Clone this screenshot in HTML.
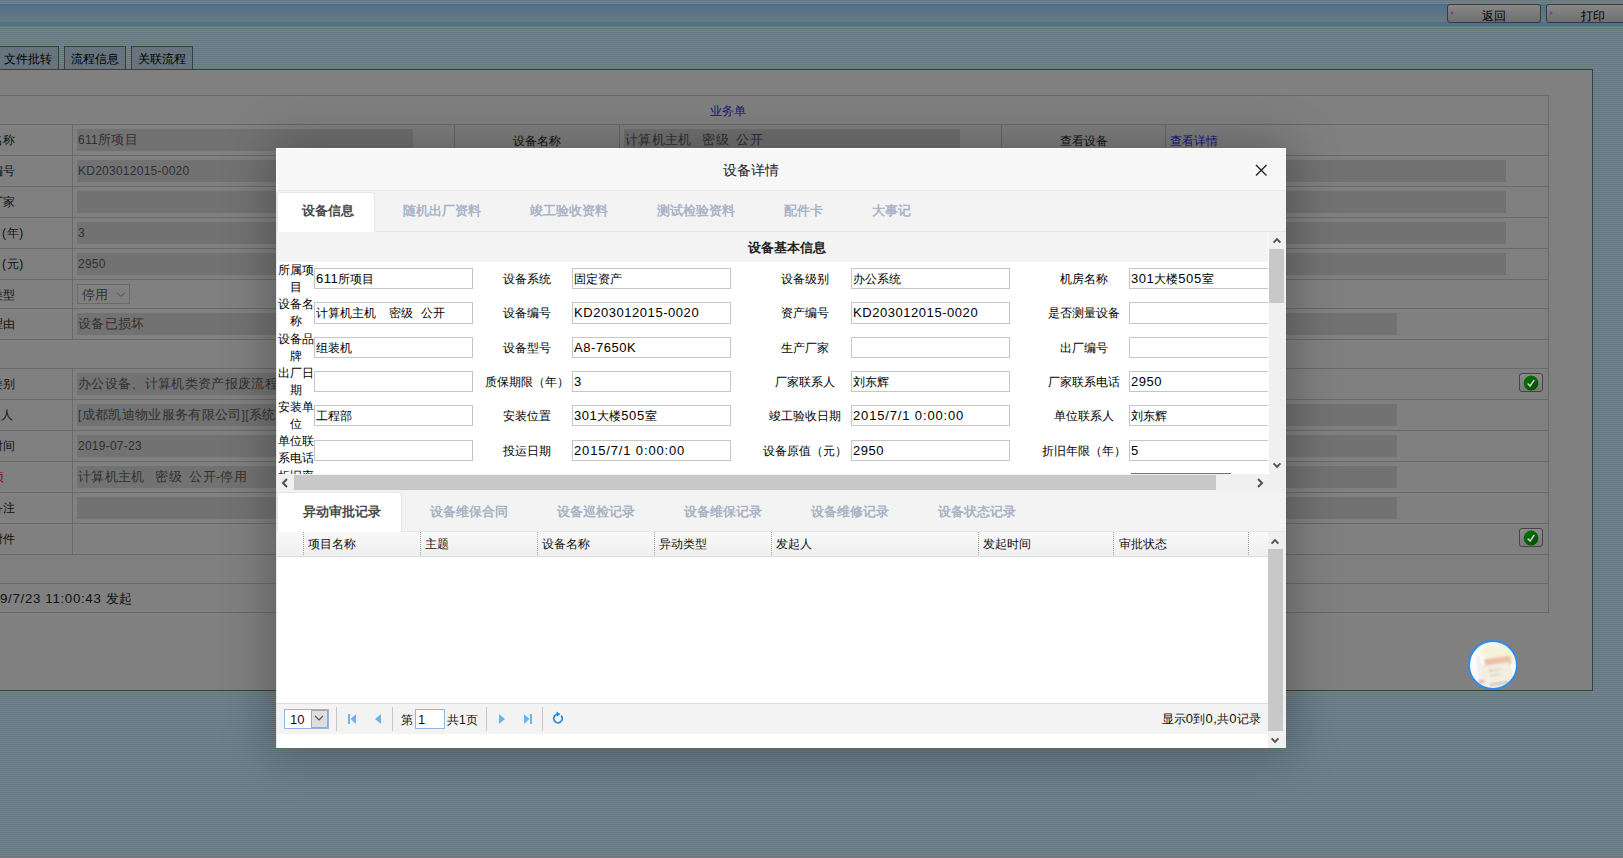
<!DOCTYPE html>
<html><head><meta charset="utf-8"><title>设备详情</title>
<style>
html,body{margin:0;padding:0;width:1623px;height:858px;overflow:hidden}
body{position:relative;font-family:"Liberation Sans",sans-serif;background:repeating-linear-gradient(to bottom,#63787f 0px,#63787f 1px,#818181 1px,#818181 2px)}
div,svg{position:absolute}
.t{white-space:nowrap}
</style></head><body>
<div style="left:0px;top:4px;width:1623px;height:1px;background:#4f6c85"></div>
<div style="left:0px;top:5px;width:1623px;height:17px;background:linear-gradient(#546f88,#667a82)"></div>
<div style="left:0px;top:22px;width:1623px;height:4px;background:#51708a"></div>
<div style="left:1447px;top:4px;width:94px;height:19px;box-sizing:border-box;border:1px solid #3b3b3b;border-radius:3px;background:linear-gradient(#888888,#6e6e6e)"></div>
<div style="left:1451px;top:11px;width:0;height:0;border-top:2.5px solid transparent;border-bottom:2.5px solid transparent;border-left:3.5px solid #7b3f9c"></div>
<div class="t" style="left:1464.0px;width:60px;text-align:center;top:8.0px;font-size:12px;line-height:16px;color:#000;">返回</div>
<div style="left:1546px;top:4px;width:90px;height:19px;box-sizing:border-box;border:1px solid #3b3b3b;border-radius:3px;background:linear-gradient(#888888,#6e6e6e)"></div>
<div style="left:1550px;top:11px;width:0;height:0;border-top:2.5px solid transparent;border-bottom:2.5px solid transparent;border-left:3.5px solid #7b3f9c"></div>
<div class="t" style="left:1563.0px;width:60px;text-align:center;top:8.0px;font-size:12px;line-height:16px;color:#000;">打印</div>
<div style="left:-10px;top:46px;width:69px;height:24px;box-sizing:border-box;border:1px solid #3c3c3c;background:#67747e"></div>
<div class="t" style="left:-2.5px;width:60px;text-align:center;top:50.5px;font-size:12px;line-height:16px;color:#000;">文件批转</div>
<div style="left:64px;top:46px;width:62px;height:24px;box-sizing:border-box;border:1px solid #3c3c3c;background:#67747e"></div>
<div class="t" style="left:65.0px;width:60px;text-align:center;top:50.5px;font-size:12px;line-height:16px;color:#000;">流程信息</div>
<div style="left:131px;top:46px;width:62px;height:24px;box-sizing:border-box;border:1px solid #3c3c3c;background:#67747e"></div>
<div class="t" style="left:132.0px;width:60px;text-align:center;top:50.5px;font-size:12px;line-height:16px;color:#000;">关联流程</div>
<div style="left:-5px;top:69px;width:1598px;height:622px;box-sizing:border-box;border:1px solid #3d3d3d;background:#808080"></div>
<div style="left:-5px;top:95px;width:1554px;height:1px;background:#6a6a6a"></div>
<div style="left:-5px;top:124px;width:1554px;height:1px;background:#6a6a6a"></div>
<div style="left:-5px;top:155px;width:1554px;height:1px;background:#6a6a6a"></div>
<div style="left:-5px;top:186px;width:1554px;height:1px;background:#6a6a6a"></div>
<div style="left:-5px;top:217px;width:1554px;height:1px;background:#6a6a6a"></div>
<div style="left:-5px;top:248px;width:1554px;height:1px;background:#6a6a6a"></div>
<div style="left:-5px;top:279px;width:1554px;height:1px;background:#6a6a6a"></div>
<div style="left:-5px;top:308px;width:1554px;height:1px;background:#6a6a6a"></div>
<div style="left:-5px;top:339px;width:1554px;height:1px;background:#6a6a6a"></div>
<div style="left:-5px;top:368px;width:1554px;height:1px;background:#6a6a6a"></div>
<div style="left:-5px;top:399px;width:1554px;height:1px;background:#6a6a6a"></div>
<div style="left:-5px;top:430px;width:1554px;height:1px;background:#6a6a6a"></div>
<div style="left:-5px;top:461px;width:1554px;height:1px;background:#6a6a6a"></div>
<div style="left:-5px;top:492px;width:1554px;height:1px;background:#6a6a6a"></div>
<div style="left:-5px;top:523px;width:1554px;height:1px;background:#6a6a6a"></div>
<div style="left:-5px;top:554px;width:1554px;height:1px;background:#6a6a6a"></div>
<div style="left:-5px;top:583px;width:1554px;height:1px;background:#6a6a6a"></div>
<div style="left:-5px;top:612px;width:1554px;height:1px;background:#6a6a6a"></div>
<div style="left:1548px;top:95px;width:1px;height:518px;background:#6a6a6a"></div>
<div style="left:72px;top:124px;width:1px;height:215px;background:#6a6a6a"></div>
<div style="left:72px;top:368px;width:1px;height:186px;background:#6a6a6a"></div>
<div style="left:454px;top:124px;width:1px;height:31px;background:#6a6a6a"></div>
<div style="left:619px;top:124px;width:1px;height:31px;background:#6a6a6a"></div>
<div style="left:1001px;top:124px;width:1px;height:31px;background:#6a6a6a"></div>
<div style="left:1165px;top:124px;width:1px;height:31px;background:#6a6a6a"></div>
<div class="t" style="left:688.0px;width:80px;text-align:center;top:102.5px;font-size:12px;line-height:16px;color:#14147a;">业务单</div>
<div style="left:77px;top:129px;width:336px;height:22px;background:#727272"></div>
<div class="t" style="left:78px;top:131.0px;font-size:13px;line-height:18px;color:#303030;"><span style="font-size:12px;letter-spacing:0.25px;">611</span><span style="font-size:13px;letter-spacing:0.33px;">所项目</span></div>
<div class="t" style="left:487.0px;width:100px;text-align:center;top:132.5px;font-size:12px;line-height:16px;color:#111;">设备名称</div>
<div style="left:624px;top:129px;width:336px;height:22px;background:#727272"></div>
<div class="t" style="left:625px;top:131.0px;font-size:13px;line-height:18px;color:#303030;"><span style="font-size:13px;letter-spacing:0.33px;">计算机主机</span><span style="font-size:12px;letter-spacing:0.25px;">&nbsp;&nbsp; </span><span style="font-size:13px;letter-spacing:0.33px;">密级</span><span style="font-size:12px;letter-spacing:0.25px;">&nbsp; </span><span style="font-size:13px;letter-spacing:0.33px;">公开</span></div>
<div class="t" style="left:1033.5px;width:100px;text-align:center;top:132.5px;font-size:12px;line-height:16px;color:#111;">查看设备</div>
<div class="t" style="left:1170px;top:132.5px;font-size:12px;line-height:16px;color:#14147a;">查看详情</div>
<div style="left:77px;top:160px;width:1429px;height:22px;background:#727272"></div>
<div class="t" style="left:78px;top:162.0px;font-size:13px;line-height:18px;color:#303030;"><span style="font-size:12px;letter-spacing:0.25px;">KD203012015-0020</span></div>
<div style="left:77px;top:191px;width:1429px;height:22px;background:#727272"></div>
<div style="left:77px;top:222px;width:1429px;height:22px;background:#727272"></div>
<div class="t" style="left:78px;top:224.0px;font-size:13px;line-height:18px;color:#303030;"><span style="font-size:12px;letter-spacing:0.25px;">3</span></div>
<div style="left:77px;top:253px;width:1429px;height:22px;background:#727272"></div>
<div class="t" style="left:78px;top:255.0px;font-size:13px;line-height:18px;color:#303030;"><span style="font-size:12px;letter-spacing:0.25px;">2950</span></div>
<div style="left:77px;top:284px;width:53px;height:20px;box-sizing:border-box;border:1px solid #6a6a6a"></div>
<div class="t" style="left:82px;top:285.5px;font-size:13px;line-height:18px;color:#303030;"><span style="letter-spacing:0.33px;">停用</span></div>
<svg style="position:absolute;left:116px;top:291px" width="10" height="7"><path d="M1 1.5 L5 5.5 L9 1.5" stroke="#4a4a4a" fill="none" stroke-width="1"/></svg>
<div style="left:77px;top:313px;width:1320px;height:22px;background:#727272"></div>
<div class="t" style="left:78px;top:315.0px;font-size:13px;line-height:18px;color:#303030;"><span style="font-size:13px;letter-spacing:0.33px;">设备已损坏</span></div>
<div style="left:77px;top:373px;width:800px;height:22px;background:#727272"></div>
<div class="t" style="left:78px;top:375.0px;font-size:13px;line-height:18px;color:#303030;"><span style="font-size:13px;letter-spacing:0.33px;">办公设备、计算机类资产报废流程</span></div>
<div style="left:77px;top:404px;width:1320px;height:22px;background:#727272"></div>
<div class="t" style="left:78px;top:406.0px;font-size:13px;line-height:18px;color:#303030;"><span style="font-size:12px;letter-spacing:0.25px;">[</span><span style="font-size:13px;letter-spacing:0.33px;">成都凯迪物业服务有限公司</span><span style="font-size:12px;letter-spacing:0.25px;">][</span><span style="font-size:13px;letter-spacing:0.33px;">系统管理员</span><span style="font-size:12px;letter-spacing:0.25px;">]</span></div>
<div style="left:77px;top:435px;width:1320px;height:22px;background:#727272"></div>
<div class="t" style="left:78px;top:437.0px;font-size:13px;line-height:18px;color:#303030;"><span style="font-size:12px;letter-spacing:0.25px;">2019-07-23</span></div>
<div style="left:77px;top:466px;width:1320px;height:22px;background:#727272"></div>
<div class="t" style="left:78px;top:468.0px;font-size:13px;line-height:18px;color:#303030;"><span style="font-size:13px;letter-spacing:0.33px;">计算机主机</span><span style="font-size:12px;letter-spacing:0.25px;">&nbsp;&nbsp; </span><span style="font-size:13px;letter-spacing:0.33px;">密级</span><span style="font-size:12px;letter-spacing:0.25px;">&nbsp; </span><span style="font-size:13px;letter-spacing:0.33px;">公开</span><span style="font-size:12px;letter-spacing:0.25px;">-</span><span style="font-size:13px;letter-spacing:0.33px;">停用</span></div>
<div style="left:77px;top:497px;width:1320px;height:22px;background:#727272"></div>
<div class="t" style="left:-105.5px;width:120px;text-align:right;top:132.0px;font-size:12px;line-height:16px;color:#111;">项目名称</div>
<div class="t" style="left:-105.5px;width:120px;text-align:right;top:163.0px;font-size:12px;line-height:16px;color:#111;">设备编号</div>
<div class="t" style="left:-105.5px;width:120px;text-align:right;top:194.0px;font-size:12px;line-height:16px;color:#111;">生产厂家</div>
<div class="t" style="left:-95.5px;width:120px;text-align:right;top:225.0px;font-size:12px;line-height:16px;color:#111;">使用年限<span style="letter-spacing:1.2px;"> (</span>年<span style="letter-spacing:1.2px;">)</span></div>
<div class="t" style="left:-95.5px;width:120px;text-align:right;top:256.0px;font-size:12px;line-height:16px;color:#111;">设备原值<span style="letter-spacing:1.2px;"> (</span>元<span style="letter-spacing:1.2px;">)</span></div>
<div class="t" style="left:-105.5px;width:120px;text-align:right;top:287.0px;font-size:12px;line-height:16px;color:#111;">报废类型</div>
<div class="t" style="left:-105.5px;width:120px;text-align:right;top:316.0px;font-size:12px;line-height:16px;color:#111;">报废理由</div>
<div class="t" style="left:-105.5px;width:120px;text-align:right;top:376.0px;font-size:12px;line-height:16px;color:#111;">流程类别</div>
<div class="t" style="left:-107.5px;width:120px;text-align:right;top:407.0px;font-size:12px;line-height:16px;color:#111;">发起人</div>
<div class="t" style="left:-105.5px;width:120px;text-align:right;top:438.0px;font-size:12px;line-height:16px;color:#111;">发起时间</div>
<div class="t" style="left:-105.5px;width:120px;text-align:right;top:500.0px;font-size:12px;line-height:16px;color:#111;">备注</div>
<div class="t" style="left:-105.5px;width:120px;text-align:right;top:531.0px;font-size:12px;line-height:16px;color:#111;">附件</div>
<div class="t" style="left:-196px;width:200px;text-align:right;top:469.0px;font-size:12px;line-height:16px;color:#8c0c14;">设备名称变更事项</div>
<div class="t" style="left:-167.5px;width:300px;text-align:right;top:589.5px;font-size:13px;line-height:18px;color:#111;"><span style="font-size:13px;letter-spacing:0.33px;">发起时间：</span><span style="font-size:13.33px;letter-spacing:0.65px;">2019/7/23 11:00:43 </span><span style="font-size:13px;letter-spacing:0.33px;">发起</span></div>
<div style="left:1519px;top:373px;width:24px;height:19px;box-sizing:border-box;border:1px solid #454545;border-radius:3px;background:linear-gradient(#8c8c8c,#7a7a7a)"></div>
<svg style="position:absolute;left:1523px;top:375px" width="16" height="16"><defs><linearGradient id="gg368" x1="0" y1="0" x2="1" y2="1"><stop offset="0" stop-color="#0a7a0a"/><stop offset="1" stop-color="#004a00"/></linearGradient></defs><circle cx="8" cy="8" r="7.4" fill="url(#gg368)"/><path d="M4.6 8.4 L7.1 11 L11.3 4.8" stroke="#d6cfd6" stroke-width="1.5" fill="none"/></svg>
<div style="left:1519px;top:528px;width:24px;height:19px;box-sizing:border-box;border:1px solid #454545;border-radius:3px;background:linear-gradient(#8c8c8c,#7a7a7a)"></div>
<svg style="position:absolute;left:1523px;top:530px" width="16" height="16"><defs><linearGradient id="gg523" x1="0" y1="0" x2="1" y2="1"><stop offset="0" stop-color="#0a7a0a"/><stop offset="1" stop-color="#004a00"/></linearGradient></defs><circle cx="8" cy="8" r="7.4" fill="url(#gg523)"/><path d="M4.6 8.4 L7.1 11 L11.3 4.8" stroke="#d6cfd6" stroke-width="1.5" fill="none"/></svg>
<div style="left:276px;top:148px;width:1010px;height:600px;background:#fff;box-shadow:0 0 45px 6px rgba(0,0,0,0.28)"></div>
<div style="left:277px;top:149px;width:1009px;height:42px;background:#f7f7f7"></div>
<div style="left:277px;top:190px;width:1009px;height:1px;background:#e8e8e8"></div>
<div class="t" style="left:701.0px;width:100px;text-align:center;top:161.0px;font-size:14px;line-height:18px;color:#222;">设备详情</div>
<svg style="position:absolute;left:1254px;top:163px" width="14" height="14"><path d="M2 2 L12.5 12.5 M12.5 2 L2 12.5" stroke="#23232e" stroke-width="1.4"/></svg>
<div style="left:277px;top:191px;width:1009px;height:41px;background:#f3f3f3"></div>
<div style="left:277px;top:231px;width:1009px;height:1px;background:#e3e7ec"></div>
<div style="left:277px;top:192px;width:98px;height:40px;box-sizing:border-box;background:#fff;border:1px solid #e3e7ec;border-bottom:none;border-radius:4px 4px 0 0"></div>
<div class="t" style="left:278.0px;width:100px;text-align:center;top:202.0px;font-size:13px;line-height:18px;color:#4a4a4a;font-weight:bold">设备信息</div>
<div class="t" style="left:392.0px;width:100px;text-align:center;top:202.0px;font-size:13px;line-height:18px;color:#a9b4c6;font-weight:bold">随机出厂资料</div>
<div class="t" style="left:519.0px;width:100px;text-align:center;top:202.0px;font-size:13px;line-height:18px;color:#a9b4c6;font-weight:bold">竣工验收资料</div>
<div class="t" style="left:645.5px;width:100px;text-align:center;top:202.0px;font-size:13px;line-height:18px;color:#a9b4c6;font-weight:bold">测试检验资料</div>
<div class="t" style="left:753.0px;width:100px;text-align:center;top:202.0px;font-size:13px;line-height:18px;color:#a9b4c6;font-weight:bold">配件卡</div>
<div class="t" style="left:841.0px;width:100px;text-align:center;top:202.0px;font-size:13px;line-height:18px;color:#a9b4c6;font-weight:bold">大事记</div>
<div style="left:277px;top:232px;width:991px;height:30px;background:#f4f4f4"></div>
<div class="t" style="left:727.0px;width:120px;text-align:center;top:238.7px;font-size:13px;line-height:18px;color:#222;font-weight:bold">设备基本信息</div>
<div style="left:0;top:0;width:1623px;height:858px;clip-path:inset(232px 355px 384px 277px)">
<div class="t" style="left:275.5px;width:40px;text-align:center;top:261.0px;font-size:12px;line-height:18px;color:#000;">所属项</div>
<div class="t" style="left:271.5px;width:48px;text-align:center;top:277.5px;font-size:12px;line-height:18px;color:#000;">目</div>
<div style="left:314px;top:268px;width:159px;height:21px;box-sizing:border-box;border:1px solid #c6c6c6;background:#fff"></div>
<div class="t" style="left:316px;top:269.5px;font-size:12px;line-height:18px;color:#000;"><span style="font-size:13px;letter-spacing:0.55px;">611</span><span style="font-size:12px;">所项目</span></div>
<div class="t" style="left:466.5px;width:120px;text-align:center;top:269.5px;font-size:12px;line-height:18px;color:#000;">设备系统</div>
<div style="left:572px;top:268px;width:159px;height:21px;box-sizing:border-box;border:1px solid #c6c6c6;background:#fff"></div>
<div class="t" style="left:574px;top:269.5px;font-size:12px;line-height:18px;color:#000;"><span style="font-size:12px;">固定资产</span></div>
<div class="t" style="left:745.0px;width:120px;text-align:center;top:269.5px;font-size:12px;line-height:18px;color:#000;">设备级别</div>
<div style="left:851px;top:268px;width:159px;height:21px;box-sizing:border-box;border:1px solid #c6c6c6;background:#fff"></div>
<div class="t" style="left:853px;top:269.5px;font-size:12px;line-height:18px;color:#000;"><span style="font-size:12px;">办公系统</span></div>
<div class="t" style="left:1024.0px;width:120px;text-align:center;top:269.5px;font-size:12px;line-height:18px;color:#000;">机房名称</div>
<div style="left:1129px;top:268px;width:159px;height:21px;box-sizing:border-box;border:1px solid #c6c6c6;background:#fff"></div>
<div class="t" style="left:1131px;top:269.5px;font-size:12px;line-height:18px;color:#000;"><span style="font-size:13px;letter-spacing:0.55px;">301</span><span style="font-size:12px;">大楼</span><span style="font-size:13px;letter-spacing:0.55px;">505</span><span style="font-size:12px;">室</span></div>
<div class="t" style="left:275.5px;width:40px;text-align:center;top:295.0px;font-size:12px;line-height:18px;color:#000;">设备名</div>
<div class="t" style="left:271.5px;width:48px;text-align:center;top:311.5px;font-size:12px;line-height:18px;color:#000;">称</div>
<div style="left:314px;top:302px;width:159px;height:22px;box-sizing:border-box;border:1px solid #c6c6c6;background:#fff"></div>
<div class="t" style="left:316px;top:303.5px;font-size:12px;line-height:18px;color:#000;"><span style="font-size:12px;">计算机主机</span><span style="font-size:13px;letter-spacing:0.55px;">&nbsp;&nbsp; </span><span style="font-size:12px;">密级</span><span style="font-size:13px;letter-spacing:0.55px;">&nbsp; </span><span style="font-size:12px;">公开</span></div>
<div class="t" style="left:466.5px;width:120px;text-align:center;top:303.5px;font-size:12px;line-height:18px;color:#000;">设备编号</div>
<div style="left:572px;top:302px;width:159px;height:22px;box-sizing:border-box;border:1px solid #c6c6c6;background:#fff"></div>
<div class="t" style="left:574px;top:303.5px;font-size:12px;line-height:18px;color:#000;"><span style="font-size:13px;letter-spacing:0.55px;">KD203012015-0020</span></div>
<div class="t" style="left:745.0px;width:120px;text-align:center;top:303.5px;font-size:12px;line-height:18px;color:#000;">资产编号</div>
<div style="left:851px;top:302px;width:159px;height:22px;box-sizing:border-box;border:1px solid #c6c6c6;background:#fff"></div>
<div class="t" style="left:853px;top:303.5px;font-size:12px;line-height:18px;color:#000;"><span style="font-size:13px;letter-spacing:0.55px;">KD203012015-0020</span></div>
<div class="t" style="left:1024.0px;width:120px;text-align:center;top:303.5px;font-size:12px;line-height:18px;color:#000;">是否测量设备</div>
<div style="left:1129px;top:302px;width:159px;height:22px;box-sizing:border-box;border:1px solid #c6c6c6;background:#fff"></div>
<div class="t" style="left:1131px;top:303.5px;font-size:12px;line-height:18px;color:#000;"></div>
<div class="t" style="left:275.5px;width:40px;text-align:center;top:330.0px;font-size:12px;line-height:18px;color:#000;">设备品</div>
<div class="t" style="left:271.5px;width:48px;text-align:center;top:346.5px;font-size:12px;line-height:18px;color:#000;">牌</div>
<div style="left:314px;top:337px;width:159px;height:21px;box-sizing:border-box;border:1px solid #c6c6c6;background:#fff"></div>
<div class="t" style="left:316px;top:338.5px;font-size:12px;line-height:18px;color:#000;"><span style="font-size:12px;">组装机</span></div>
<div class="t" style="left:466.5px;width:120px;text-align:center;top:338.5px;font-size:12px;line-height:18px;color:#000;">设备型号</div>
<div style="left:572px;top:337px;width:159px;height:21px;box-sizing:border-box;border:1px solid #c6c6c6;background:#fff"></div>
<div class="t" style="left:574px;top:338.5px;font-size:12px;line-height:18px;color:#000;"><span style="font-size:13px;letter-spacing:0.55px;">A8-7650K</span></div>
<div class="t" style="left:745.0px;width:120px;text-align:center;top:338.5px;font-size:12px;line-height:18px;color:#000;">生产厂家</div>
<div style="left:851px;top:337px;width:159px;height:21px;box-sizing:border-box;border:1px solid #c6c6c6;background:#fff"></div>
<div class="t" style="left:853px;top:338.5px;font-size:12px;line-height:18px;color:#000;"></div>
<div class="t" style="left:1024.0px;width:120px;text-align:center;top:338.5px;font-size:12px;line-height:18px;color:#000;">出厂编号</div>
<div style="left:1129px;top:337px;width:159px;height:21px;box-sizing:border-box;border:1px solid #c6c6c6;background:#fff"></div>
<div class="t" style="left:1131px;top:338.5px;font-size:12px;line-height:18px;color:#000;"></div>
<div class="t" style="left:275.5px;width:40px;text-align:center;top:364.0px;font-size:12px;line-height:18px;color:#000;">出厂日</div>
<div class="t" style="left:271.5px;width:48px;text-align:center;top:380.5px;font-size:12px;line-height:18px;color:#000;">期</div>
<div style="left:314px;top:371px;width:159px;height:21px;box-sizing:border-box;border:1px solid #c6c6c6;background:#fff"></div>
<div class="t" style="left:316px;top:372.5px;font-size:12px;line-height:18px;color:#000;"></div>
<div class="t" style="left:466.5px;width:120px;text-align:center;top:372.5px;font-size:12px;line-height:18px;color:#000;">质保期限（年）</div>
<div style="left:572px;top:371px;width:159px;height:21px;box-sizing:border-box;border:1px solid #c6c6c6;background:#fff"></div>
<div class="t" style="left:574px;top:372.5px;font-size:12px;line-height:18px;color:#000;"><span style="font-size:13px;letter-spacing:0.55px;">3</span></div>
<div class="t" style="left:745.0px;width:120px;text-align:center;top:372.5px;font-size:12px;line-height:18px;color:#000;">厂家联系人</div>
<div style="left:851px;top:371px;width:159px;height:21px;box-sizing:border-box;border:1px solid #c6c6c6;background:#fff"></div>
<div class="t" style="left:853px;top:372.5px;font-size:12px;line-height:18px;color:#000;"><span style="font-size:12px;">刘东辉</span></div>
<div class="t" style="left:1024.0px;width:120px;text-align:center;top:372.5px;font-size:12px;line-height:18px;color:#000;">厂家联系电话</div>
<div style="left:1129px;top:371px;width:159px;height:21px;box-sizing:border-box;border:1px solid #c6c6c6;background:#fff"></div>
<div class="t" style="left:1131px;top:372.5px;font-size:12px;line-height:18px;color:#000;"><span style="font-size:13px;letter-spacing:0.55px;">2950</span></div>
<div class="t" style="left:275.5px;width:40px;text-align:center;top:398.0px;font-size:12px;line-height:18px;color:#000;">安装单</div>
<div class="t" style="left:271.5px;width:48px;text-align:center;top:414.5px;font-size:12px;line-height:18px;color:#000;">位</div>
<div style="left:314px;top:405px;width:159px;height:21px;box-sizing:border-box;border:1px solid #c6c6c6;background:#fff"></div>
<div class="t" style="left:316px;top:406.5px;font-size:12px;line-height:18px;color:#000;"><span style="font-size:12px;">工程部</span></div>
<div class="t" style="left:466.5px;width:120px;text-align:center;top:406.5px;font-size:12px;line-height:18px;color:#000;">安装位置</div>
<div style="left:572px;top:405px;width:159px;height:21px;box-sizing:border-box;border:1px solid #c6c6c6;background:#fff"></div>
<div class="t" style="left:574px;top:406.5px;font-size:12px;line-height:18px;color:#000;"><span style="font-size:13px;letter-spacing:0.55px;">301</span><span style="font-size:12px;">大楼</span><span style="font-size:13px;letter-spacing:0.55px;">505</span><span style="font-size:12px;">室</span></div>
<div class="t" style="left:745.0px;width:120px;text-align:center;top:406.5px;font-size:12px;line-height:18px;color:#000;">竣工验收日期</div>
<div style="left:851px;top:405px;width:159px;height:21px;box-sizing:border-box;border:1px solid #c6c6c6;background:#fff"></div>
<div class="t" style="left:853px;top:406.5px;font-size:12px;line-height:18px;color:#000;"><span style="font-size:13px;letter-spacing:0.85px;">2015/7/1 0:00:00</span></div>
<div class="t" style="left:1024.0px;width:120px;text-align:center;top:406.5px;font-size:12px;line-height:18px;color:#000;">单位联系人</div>
<div style="left:1129px;top:405px;width:159px;height:21px;box-sizing:border-box;border:1px solid #c6c6c6;background:#fff"></div>
<div class="t" style="left:1131px;top:406.5px;font-size:12px;line-height:18px;color:#000;"><span style="font-size:12px;">刘东辉</span></div>
<div class="t" style="left:275.5px;width:40px;text-align:center;top:432.0px;font-size:12px;line-height:18px;color:#000;">单位联</div>
<div class="t" style="left:271.5px;width:48px;text-align:center;top:448.5px;font-size:12px;line-height:18px;color:#000;">系电话</div>
<div style="left:314px;top:440px;width:159px;height:21px;box-sizing:border-box;border:1px solid #c6c6c6;background:#fff"></div>
<div class="t" style="left:316px;top:441.5px;font-size:12px;line-height:18px;color:#000;"></div>
<div class="t" style="left:466.5px;width:120px;text-align:center;top:441.5px;font-size:12px;line-height:18px;color:#000;">投运日期</div>
<div style="left:572px;top:440px;width:159px;height:21px;box-sizing:border-box;border:1px solid #c6c6c6;background:#fff"></div>
<div class="t" style="left:574px;top:441.5px;font-size:12px;line-height:18px;color:#000;"><span style="font-size:13px;letter-spacing:0.85px;">2015/7/1 0:00:00</span></div>
<div class="t" style="left:745.0px;width:120px;text-align:center;top:441.5px;font-size:12px;line-height:18px;color:#000;">设备原值（元）</div>
<div style="left:851px;top:440px;width:159px;height:21px;box-sizing:border-box;border:1px solid #c6c6c6;background:#fff"></div>
<div class="t" style="left:853px;top:441.5px;font-size:12px;line-height:18px;color:#000;"><span style="font-size:13px;letter-spacing:0.55px;">2950</span></div>
<div class="t" style="left:1024.0px;width:120px;text-align:center;top:441.5px;font-size:12px;line-height:18px;color:#000;">折旧年限（年）</div>
<div style="left:1129px;top:440px;width:159px;height:21px;box-sizing:border-box;border:1px solid #c6c6c6;background:#fff"></div>
<div class="t" style="left:1131px;top:441.5px;font-size:12px;line-height:18px;color:#000;"><span style="font-size:13px;letter-spacing:0.55px;">5</span></div>
<div class="t" style="left:275.5px;width:40px;text-align:center;top:466.5px;font-size:12px;line-height:18px;color:#000;">折旧率</div>
<div style="left:1131px;top:473px;width:100px;height:2px;background:#3b7bd6"></div>
</div>
<div style="left:1269px;top:232px;width:17px;height:243px;background:#f0f0f0"></div>
<svg style="position:absolute;left:1271px;top:236px" width="12" height="9"><path d="M2.6 6.6 L6 3.2 L9.4 6.6" stroke="#505050" stroke-width="1.9" fill="none"/></svg>
<div style="left:1269px;top:249px;width:15px;height:54px;background:#c8c8c8"></div>
<svg style="position:absolute;left:1271px;top:461px" width="12" height="9"><path d="M2.6 2.4 L6 5.8 L9.4 2.4" stroke="#505050" stroke-width="1.9" fill="none"/></svg>
<div style="left:277px;top:474px;width:1009px;height:17px;background:#f0f0f0"></div>
<div style="left:294px;top:475px;width:922px;height:15px;background:#c8c8c8"></div>
<svg style="position:absolute;left:280px;top:477px" width="10" height="12"><path d="M7 2 L3 6 L7 10" stroke="#505050" stroke-width="2" fill="none"/></svg>
<svg style="position:absolute;left:1255px;top:477px" width="10" height="12"><path d="M3 2 L7 6 L3 10" stroke="#505050" stroke-width="2" fill="none"/></svg>
<div style="left:277px;top:491px;width:1009px;height:41px;background:#f3f3f3"></div>
<div style="left:277px;top:531px;width:1007px;height:1px;background:#e3e7ec"></div>
<div style="left:277px;top:492px;width:125px;height:40px;box-sizing:border-box;background:#fff;border:1px solid #e3e7ec;border-bottom:none;border-radius:4px 4px 0 0"></div>
<div class="t" style="left:282.0px;width:120px;text-align:center;top:503.0px;font-size:13px;line-height:18px;color:#4a4a4a;font-weight:bold">异动审批记录</div>
<div class="t" style="left:409.0px;width:120px;text-align:center;top:503.0px;font-size:13px;line-height:18px;color:#a9b4c6;font-weight:bold">设备维保合同</div>
<div class="t" style="left:536.0px;width:120px;text-align:center;top:503.0px;font-size:13px;line-height:18px;color:#a9b4c6;font-weight:bold">设备巡检记录</div>
<div class="t" style="left:663.0px;width:120px;text-align:center;top:503.0px;font-size:13px;line-height:18px;color:#a9b4c6;font-weight:bold">设备维保记录</div>
<div class="t" style="left:790.0px;width:120px;text-align:center;top:503.0px;font-size:13px;line-height:18px;color:#a9b4c6;font-weight:bold">设备维修记录</div>
<div class="t" style="left:917.0px;width:120px;text-align:center;top:503.0px;font-size:13px;line-height:18px;color:#a9b4c6;font-weight:bold">设备状态记录</div>
<div style="left:277px;top:532px;width:991px;height:24px;background:linear-gradient(#f8f8f8,#efefef)"></div>
<div style="left:277px;top:556px;width:991px;height:1px;background:#dcdcdc"></div>
<div style="left:303px;top:532px;width:1px;height:24px;background:repeating-linear-gradient(#a0a0a0 0 1px,transparent 1px 2px)"></div>
<div style="left:420px;top:532px;width:1px;height:24px;background:repeating-linear-gradient(#a0a0a0 0 1px,transparent 1px 2px)"></div>
<div style="left:537px;top:532px;width:1px;height:24px;background:repeating-linear-gradient(#a0a0a0 0 1px,transparent 1px 2px)"></div>
<div style="left:654px;top:532px;width:1px;height:24px;background:repeating-linear-gradient(#a0a0a0 0 1px,transparent 1px 2px)"></div>
<div style="left:771px;top:532px;width:1px;height:24px;background:repeating-linear-gradient(#a0a0a0 0 1px,transparent 1px 2px)"></div>
<div style="left:978px;top:532px;width:1px;height:24px;background:repeating-linear-gradient(#a0a0a0 0 1px,transparent 1px 2px)"></div>
<div style="left:1113px;top:532px;width:1px;height:24px;background:repeating-linear-gradient(#a0a0a0 0 1px,transparent 1px 2px)"></div>
<div style="left:1248px;top:532px;width:1px;height:24px;background:repeating-linear-gradient(#a0a0a0 0 1px,transparent 1px 2px)"></div>
<div class="t" style="left:308px;top:535.5px;font-size:12px;line-height:16px;color:#111;">项目名称</div>
<div class="t" style="left:425px;top:535.5px;font-size:12px;line-height:16px;color:#111;">主题</div>
<div class="t" style="left:542px;top:535.5px;font-size:12px;line-height:16px;color:#111;">设备名称</div>
<div class="t" style="left:659px;top:535.5px;font-size:12px;line-height:16px;color:#111;">异动类型</div>
<div class="t" style="left:776px;top:535.5px;font-size:12px;line-height:16px;color:#111;">发起人</div>
<div class="t" style="left:983px;top:535.5px;font-size:12px;line-height:16px;color:#111;">发起时间</div>
<div class="t" style="left:1118.5px;top:535.5px;font-size:12px;line-height:16px;color:#111;">审批状态</div>
<div style="left:277px;top:703px;width:991px;height:1px;background:#dcdcdc"></div>
<div style="left:277px;top:704px;width:991px;height:30px;background:#f3f3f3"></div>
<div style="left:284px;top:709px;width:45px;height:20px;box-sizing:border-box;border:1px solid #90b5e6;background:#fff"></div>
<div style="left:311px;top:710px;width:17px;height:18px;box-sizing:border-box;border:1px solid #a7a7a7;background:#dedede"></div>
<svg style="position:absolute;left:313px;top:714px" width="12" height="9"><path d="M2 2 L6 6 L10 2" stroke="#555" stroke-width="1.2" fill="none"/></svg>
<div class="t" style="left:290px;top:710.5px;font-size:13px;line-height:18px;color:#111;">10</div>
<div style="left:336px;top:707px;width:1px;height:24px;background:#c8c8c8"></div>
<div style="left:392px;top:707px;width:1px;height:24px;background:#c8c8c8"></div>
<div style="left:486px;top:707px;width:1px;height:24px;background:#c8c8c8"></div>
<div style="left:542px;top:707px;width:1px;height:24px;background:#c8c8c8"></div>
<svg style="position:absolute;left:346px;top:713px" width="12" height="12"><rect x="2" y="1" width="2" height="10" fill="#6bb5e8"/><path d="M10 1 L4.5 6 L10 11 Z" fill="#6bb5e8"/></svg>
<svg style="position:absolute;left:372px;top:713px" width="12" height="12"><path d="M9 1 L3 6 L9 11 Z" fill="#6bb5e8"/></svg>
<div class="t" style="left:401px;top:711.5px;font-size:12px;line-height:16px;color:#111;">第</div>
<div style="left:415px;top:709px;width:30px;height:20px;box-sizing:border-box;border:1px solid #90b5e6;background:#fff"></div>
<div class="t" style="left:418px;top:710.5px;font-size:13px;line-height:18px;color:#111;">1</div>
<div class="t" style="left:447px;top:711.5px;font-size:12px;line-height:16px;color:#111;">共1页</div>
<svg style="position:absolute;left:496px;top:713px" width="12" height="12"><path d="M3 1 L9 6 L3 11 Z" fill="#6bb5e8"/></svg>
<svg style="position:absolute;left:522px;top:713px" width="12" height="12"><path d="M2 1 L7.5 6 L2 11 Z" fill="#6bb5e8"/><rect x="8" y="1" width="2" height="10" fill="#6bb5e8"/></svg>
<svg style="position:absolute;left:551px;top:711px" width="14" height="14"><path d="M10.2 4.6 A4.3 4.3 0 1 1 6.5 3.2" stroke="#2c8bd6" stroke-width="1.8" fill="none"/><path d="M5.5 0.5 L9.5 3 L5.8 5.8 Z" fill="#2c8bd6"/></svg>
<div class="t" style="left:1061px;width:200px;text-align:right;top:710.5px;font-size:12px;line-height:16px;color:#111;">显示<span style="font-size:13px;letter-spacing:0.5px;">0</span>到<span style="font-size:13px;letter-spacing:0.5px;">0,</span>共<span style="font-size:13px;letter-spacing:0.5px;">0</span>记录</div>
<div style="left:1268px;top:532px;width:18px;height:216px;background:#f0f0f0"></div>
<div style="left:1268px;top:549px;width:15px;height:182px;background:#c8c8c8"></div>
<svg style="position:absolute;left:1269px;top:537px" width="12" height="9"><path d="M2.6 6.6 L6 3.2 L9.4 6.6" stroke="#505050" stroke-width="1.9" fill="none"/></svg>
<svg style="position:absolute;left:1269px;top:736px" width="12" height="9"><path d="M2.6 2.4 L6 5.8 L9.4 2.4" stroke="#505050" stroke-width="1.9" fill="none"/></svg>
<div style="left:276px;top:191px;width:1px;height:557px;background:#e3e7ed"></div>
<svg style="left:1468px;top:640px" width="50" height="50" viewBox="0 0 50 50">
<defs><clipPath id="cc"><circle cx="25" cy="25" r="24"/></clipPath><filter id="bl" x="-10%" y="-10%" width="120%" height="120%"><feGaussianBlur stdDeviation="1"/></filter></defs>
<g clip-path="url(#cc)">
<rect width="50" height="50" fill="#fcfbf9"/>
<g filter="url(#bl)">
<ellipse cx="29" cy="11" rx="17" ry="7" fill="#f6f2da"/>
<ellipse cx="40" cy="19" rx="6" ry="5" fill="#f2eecb"/>
<path d="M9 16 L12 16 L14 46 L11 46 Z" fill="#efecea"/>
<path d="M16 19 L42 16 L43 25 L18 28 Z" fill="#efbea6"/>
<path d="M14 26 L41 22 L46 50 L18 53 Z" fill="#f3efe2" stroke="#e2dac8" stroke-width="0.8"/>
<path d="M22 31 L33 29 M22 36 L32 34" stroke="#cbbcb8" stroke-width="1.1"/>
<path d="M21 30.5 L23 30.5" stroke="#e07070" stroke-width="1.1"/>
<path d="M22 45 L40 42" stroke="#c8bdb8" stroke-width="2"/>
<rect x="11" y="40" width="5" height="3" fill="#eea59c"/>
</g>
</g>
<circle cx="25" cy="25" r="24" fill="none" stroke="#2e8cf0" stroke-width="2"/>
</svg>
</body></html>
